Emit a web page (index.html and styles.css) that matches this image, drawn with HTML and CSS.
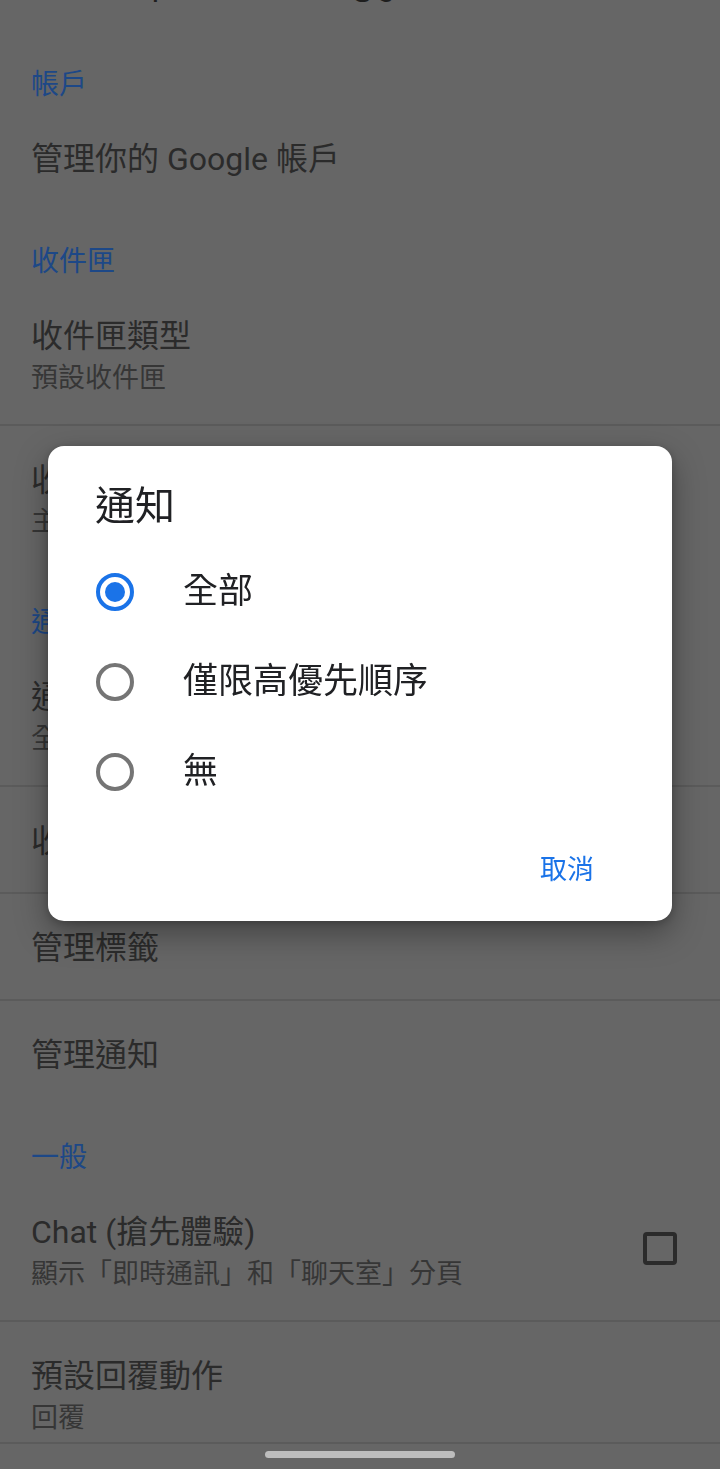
FILE: index.html
```html
<!DOCTYPE html>
<html lang="zh-Hant">
<head>
<meta charset="utf-8">
<title>設定</title>
<link rel="stylesheet" href="styles.css">
</head>
<body>
<main class="settings">
  <div class="cut">michael.pan19890609@gmail.com</div>

  <div class="cat">帳戶</div>
  <div class="item"><div class="title">管理你的 Google 帳戶</div></div>

  <div class="cat">收件匣</div>
  <div class="item two"><div class="text"><div class="title">收件匣類型</div><div class="sub">預設收件匣</div></div></div>
  <div class="divider"></div>
  <div class="item two"><div class="text"><div class="title">收件匣類別</div><div class="sub">主要、社交網路、促銷內容</div></div></div>

  <div class="cat cat-tight">通知</div>
  <div class="item two"><div class="text"><div class="title">通知</div><div class="sub">全部</div></div></div>
  <div class="divider"></div>
  <div class="item"><div class="title">收件匣通知</div></div>
  <div class="divider"></div>
  <div class="item"><div class="title">管理標籤</div></div>
  <div class="divider"></div>
  <div class="item"><div class="title">管理通知</div></div>

  <div class="cat">一般</div>
  <div class="item two with-control">
    <div class="text"><div class="title">Chat (搶先體驗)</div><div class="sub">顯示「即時通訊」和「聊天室」分頁</div></div>
    <span class="checkbox"></span>
  </div>
  <div class="divider"></div>
  <div class="item two"><div class="text"><div class="title">預設回覆動作</div><div class="sub">回覆</div></div></div>
</main>

<div class="navbar"><span class="home"></span></div>

<section class="dialog" role="dialog">
  <h2 class="dialog-title">通知</h2>
  <div class="options">
    <div class="option"><span class="radio checked"></span><span class="label">全部</span></div>
    <div class="option"><span class="radio"></span><span class="label">僅限高優先順序</span></div>
    <div class="option"><span class="radio"></span><span class="label">無</span></div>
  </div>
  <div class="actions"><span class="btn">取消</span></div>
</section>
</body>
</html>
```
FILE: styles.css
```css
html, body {
  margin: 0;
  padding: 0;
}
body {
  width: 720px;
  height: 1469px;
  overflow: hidden;
  background: #666666;
  font-family: Roboto, "Noto Sans CJK TC", "Noto Sans", sans-serif;
  color: #2b2b2b;
}
.settings {
  display: flex;
  flex-direction: column;
}
.cut {
  margin-top: -37px;
  padding: 0 31px 26px;
  font-size: 32px;
  line-height: 44px;
  color: #1e1e1e;
}
.cat {
  padding: 32px 31px 0;
  font-size: 28px;
  line-height: 40px;
  color: #1d4887;
}
.cat-tight {
  padding-top: 35px;
}
.item {
  height: 105px;
  box-sizing: border-box;
  padding: 32px 31px 0;
  display: flex;
  align-items: flex-start;
}
.item.two {
  height: 142px;
}
.item.with-control {
  align-items: center;
  padding-top: 5px;
  padding-right: 43px;
  justify-content: space-between;
}
.title {
  font-size: 32px;
  line-height: 44px;
  color: #2b2b2b;
  white-space: nowrap;
}
.sub {
  font-size: 27px;
  line-height: 40px;
  color: #363636;
  white-space: nowrap;
}
.divider {
  height: 2px;
  background: #5b5b5b;
}
.checkbox {
  width: 34px;
  height: 33px;
  box-sizing: border-box;
  border: 4px solid #2b2b2b;
  border-radius: 4px;
  margin-top: -6px;
}
.navbar {
  position: fixed;
  left: 0;
  bottom: 0;
  width: 720px;
  height: 27px;
  box-sizing: border-box;
  border-top: 2px solid #5b5b5b;
  background: #666666;
  display: flex;
  justify-content: center;
  padding-top: 7px;
}
.home {
  width: 190px;
  height: 7px;
  border-radius: 4px;
  background: #bdbdbd;
}
.dialog {
  position: fixed;
  top: 446px;
  left: 48px;
  width: 624px;
  box-sizing: border-box;
  padding: 35px 0 31px;
  background: #ffffff;
  border-radius: 16px;
  box-shadow: 0 12px 32px rgba(0, 0, 0, 0.35), 0 2px 8px rgba(0, 0, 0, 0.2);
  display: flex;
  flex-direction: column;
}
.dialog-title {
  margin: 0;
  padding: 0 47px;
  font-size: 40px;
  line-height: 52px;
  font-weight: 400;
  color: #202124;
}
.options {
  margin-top: 14px;
  display: flex;
  flex-direction: column;
}
.option {
  height: 90px;
  display: flex;
  align-items: center;
  padding-left: 48px;
}
.option:nth-child(3) {
  height: 89px;
}
.radio {
  width: 38px;
  height: 38px;
  box-sizing: border-box;
  border: 4px solid #757575;
  border-radius: 50%;
  display: flex;
  align-items: center;
  justify-content: center;
  flex: none;
}
.radio.checked {
  border-color: #1a73e8;
}
.radio.checked::after {
  content: "";
  width: 20px;
  height: 20px;
  border-radius: 50%;
  background: #1a73e8;
}
.label {
  margin-left: 49px;
  font-size: 35px;
  line-height: 48px;
  color: #202124;
}
.actions {
  margin-top: 34px;
  display: flex;
  justify-content: flex-end;
  padding-right: 78px;
}
.btn {
  font-size: 27px;
  line-height: 40px;
  color: #1a73e8;
}
```
